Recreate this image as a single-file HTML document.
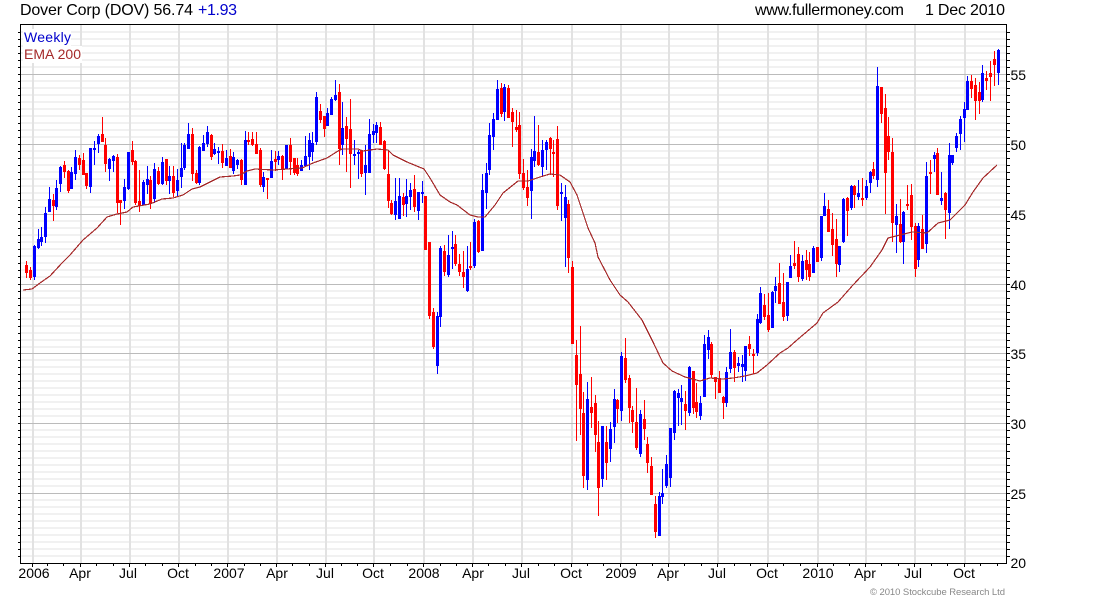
<!DOCTYPE html>
<html><head><meta charset="utf-8"><title>Dover Corp</title>
<style>html,body{margin:0;padding:0;background:#fff;width:1100px;height:600px;overflow:hidden}svg{display:block}text{font-family:"Liberation Sans",Arial,sans-serif}</style></head>
<body>
<svg width="1100" height="600" viewBox="0 0 1100 600" xmlns="http://www.w3.org/2000/svg">
<rect width="1100" height="600" fill="#fff"/>
<g shape-rendering="crispEdges" fill="none">
<path stroke="#f1f1f1" stroke-width="2" d="M21 32H1006M21 39H1006M21 46H1006M21 53H1006M21 60H1006M21 67H1006M21 81H1006M21 88H1006M21 95H1006M21 102H1006M21 109H1006M21 116H1006M21 123H1006M21 130H1006M21 137H1006M21 151H1006M21 158H1006M21 165H1006M21 172H1006M21 179H1006M21 186H1006M21 193H1006M21 200H1006M21 207H1006M21 221H1006M21 228H1006M21 235H1006M21 242H1006M21 249H1006M21 256H1006M21 263H1006M21 270H1006M21 277H1006M21 291H1006M21 298H1006M21 305H1006M21 312H1006M21 319H1006M21 326H1006M21 333H1006M21 340H1006M21 347H1006M21 360H1006M21 367H1006M21 374H1006M21 381H1006M21 388H1006M21 395H1006M21 402H1006M21 409H1006M21 416H1006M21 430H1006M21 437H1006M21 444H1006M21 451H1006M21 458H1006M21 465H1006M21 472H1006M21 479H1006M21 486H1006M21 500H1006M21 507H1006M21 514H1006M21 521H1006M21 528H1006M21 535H1006M21 542H1006M21 549H1006M21 556H1006"/>
<path stroke="#e2e2e2" stroke-width="1" d="M32.5 25V563M33.5 25V563M80.5 25V563M81.5 25V563M129.5 25V563M130.5 25V563M178.5 25V563M179.5 25V563M227.5 25V563M228.5 25V563M276.5 25V563M277.5 25V563M325.5 25V563M326.5 25V563M373.5 25V563M374.5 25V563M423.5 25V563M424.5 25V563M472.5 25V563M473.5 25V563M521.5 25V563M522.5 25V563M571.5 25V563M572.5 25V563M620.5 25V563M621.5 25V563M668.5 25V563M669.5 25V563M717.5 25V563M718.5 25V563M767.5 25V563M768.5 25V563M817.5 25V563M818.5 25V563M865.5 25V563M866.5 25V563M914.5 25V563M915.5 25V563M964.5 25V563M965.5 25V563"/>
<path stroke="#bbbbbb" stroke-width="1" d="M21 74.5H1006M21 144.5H1006M21 214.5H1006M21 284.5H1006M21 353.5H1006M21 423.5H1006M21 493.5H1006"/>
</g>
<rect x="23" y="29" width="48" height="17" fill="#fff"/>
<rect x="23" y="46" width="59" height="17" fill="#fff"/>
<g shape-rendering="crispEdges" fill="none" stroke="#0000ff">
<path stroke-width="1" d="M34.5 245V280M38.5 229V249M41.5 227V246M45.5 207V243M49.5 187V212M56.5 180V210M60.5 166V192M71.5 167V189M75.5 150V180M90.5 148V193M94.5 141V165M98.5 134V153M109.5 158V181M113.5 155V172M124.5 179V209M128.5 152V190M143.5 180V205M147.5 166V194M154.5 163V203M162.5 157V185M169.5 166V194M177.5 169V196M181.5 143V188M184.5 143V170M188.5 123V149M199.5 146V185M203.5 135V151M207.5 126V147M214.5 143V155M218.5 147V164M226.5 150V166M233.5 152V174M237.5 159V169M245.5 131V185M263.5 172V192M271.5 150V178M278.5 151V165M286.5 145V169M301.5 160V171M305.5 136V167M309.5 133V170M312.5 132V161M316.5 92V145M327.5 108V126M331.5 97V115M335.5 80V101M342.5 102V155M354.5 140V165M358.5 150V179M365.5 145V195M369.5 119V173M373.5 124V143M376.5 122V143M395.5 178V220M399.5 178V219M406.5 179V217M410.5 183V210M418.5 192V220M422.5 181V203M437.5 312V374M440.5 246V327M448.5 235V277M452.5 231V269M467.5 246V292M474.5 219V268M482.5 174V251M486.5 163V209M489.5 123V175M493.5 113V150M497.5 80V120M504.5 84V121M531.5 149V219M534.5 116V167M542.5 140V177M546.5 140V170M561.5 183V221M565.5 185V267M587.5 382V490M602.5 426V487M610.5 422V462M614.5 389V443M621.5 352V421M640.5 410V457M659.5 492V536M662.5 469V504M666.5 455V488M670.5 428V487M674.5 390V440M678.5 389V426M681.5 385V425M689.5 366V416M700.5 396V420M704.5 335V397M708.5 330V359M726.5 367V407M730.5 329V373M738.5 357V372M742.5 355V382M745.5 346V381M757.5 314V356M760.5 287V324M772.5 291V328M775.5 277V303M787.5 282V321M790.5 255V278M802.5 255V281M813.5 246V273M821.5 216V261M824.5 193V216M839.5 246V272M843.5 198V243M851.5 185V210M858.5 180V200M866.5 180V200M870.5 171V193M877.5 67V187M896.5 204V253M903.5 211V264M918.5 223V267M926.5 162V253M934.5 152V172M941.5 172V205M949.5 143V229M952.5 155V165M956.5 133V152M960.5 116V150M964.5 102V142M967.5 76V110M982.5 65V102M998.5 49V85"/>
<path stroke-width="3" d="M34.5 246V277M38.5 239V248M41.5 237V242M45.5 213V237M49.5 199V212M56.5 188V207M60.5 167V184M71.5 172V189M75.5 157V174M90.5 148V187M94.5 148V150M98.5 136V144M109.5 159V169M113.5 156V161M124.5 187V201M128.5 152V189M143.5 182V205M147.5 179V185M154.5 169V199M162.5 162V184M169.5 176V181M177.5 180V191M181.5 168V177M184.5 145V168M188.5 134V149M199.5 147V183M203.5 143V151M207.5 132V144M214.5 149V154M218.5 151V153M226.5 158V166M233.5 157V171M237.5 160V165M245.5 140V185M263.5 177V187M271.5 161V178M278.5 156V160M286.5 145V169M301.5 165V171M305.5 156V166M309.5 140V157M312.5 143V152M316.5 97V142M327.5 113V126M331.5 99V115M335.5 95V100M342.5 128V145M354.5 154V156M358.5 152V154M365.5 165V173M369.5 134V173M373.5 131V135M376.5 125V133M395.5 201V215M399.5 196V219M406.5 196V204M410.5 190V197M418.5 192V211M422.5 192V194M437.5 316V366M440.5 248V317M448.5 255V275M452.5 247V249M467.5 269V291M474.5 222V266M482.5 190V251M486.5 173V193M489.5 135V170M493.5 119V137M497.5 89V120M504.5 87V112M531.5 157V191M534.5 151V161M542.5 150V167M546.5 142V150M561.5 192V194M565.5 197V218M587.5 399V480M602.5 426V479M610.5 429V449M614.5 399V427M621.5 356V411M640.5 414V454M659.5 496V536M662.5 493V497M666.5 464V486M670.5 428V478M674.5 391V433M678.5 393V398M681.5 398V402M689.5 367V413M700.5 403V416M704.5 344V397M708.5 337V350M726.5 372V403M730.5 352V369M738.5 363V366M742.5 364V367M745.5 346V371M757.5 319V353M760.5 293V323M772.5 292V328M775.5 286V291M787.5 282V316M790.5 266V278M802.5 261V279M813.5 248V273M821.5 216V258M824.5 206V216M839.5 246V265M843.5 199V242M851.5 186V208M858.5 193V197M866.5 186V198M870.5 172V183M877.5 86V180M896.5 216V225M903.5 212V242M918.5 226V260M926.5 176V244M934.5 155V159M941.5 198V201M949.5 155V213M952.5 155V163M956.5 136V148M960.5 119V134M964.5 109V118M967.5 81V110M982.5 73V100M998.5 50V73"/>
</g>
<g shape-rendering="crispEdges" fill="none" stroke="#ff0000">
<path stroke-width="1" d="M26.5 261V278M30.5 267V280M53.5 194V221M64.5 161V178M68.5 170V193M79.5 155V170M83.5 153V175M86.5 173V189M102.5 117V142M105.5 138V172M117.5 154V213M120.5 200V225M132.5 141V165M135.5 160V205M139.5 170V212M150.5 176V209M158.5 167V185M166.5 159V185M173.5 166V197M192.5 128V181M196.5 170V184M211.5 134V160M222.5 144V168M230.5 149V168M241.5 159V185M248.5 132V145M252.5 132V146M256.5 132V154M260.5 148V187M267.5 178V199M275.5 151V171M282.5 155V180M290.5 138V175M294.5 158V175M297.5 158V176M320.5 104V123M324.5 116V137M339.5 84V165M346.5 117V172M350.5 99V188M361.5 150V177M380.5 122V145M384.5 140V170M388.5 150V208M391.5 200V215M403.5 193V216M414.5 175V212M425.5 196V250M429.5 242V319M433.5 308V349M444.5 245V276M455.5 235V266M459.5 254V276M463.5 251V288M470.5 242V270M478.5 220V253M501.5 83V117M508.5 85V118M512.5 108V147M516.5 110V132M519.5 112V179M523.5 159V190M527.5 170V206M538.5 125V166M550.5 137V175M553.5 140V177M557.5 126V210M568.5 200V273M572.5 261V344M576.5 340V441M580.5 326V435M583.5 392V488M591.5 377V428M595.5 395V452M598.5 421V516M606.5 426V480M617.5 399V423M625.5 338V383M629.5 375V423M632.5 406V433M636.5 388V450M644.5 400V440M647.5 437V473M651.5 457V495M655.5 496V538M685.5 391V430M693.5 371V414M696.5 383V418M711.5 342V378M715.5 377V399M719.5 371V393M723.5 396V419M734.5 350V382M749.5 336V356M753.5 349V374M764.5 294V320M768.5 293V332M779.5 263V304M783.5 273V321M794.5 241V269M798.5 247V282M806.5 250V280M809.5 252V281M817.5 247V262M828.5 200V232M832.5 213V256M836.5 219V277M847.5 197V236M854.5 185V208M862.5 178V206M873.5 162V179M881.5 87V123M885.5 94V214M888.5 117V160M892.5 138V242M900.5 199V243M907.5 185V210M911.5 184V240M915.5 223V277M922.5 215V249M930.5 160V194M937.5 148V195M945.5 192V239M971.5 75V98M975.5 78V120M979.5 82V114M986.5 71V90M990.5 61V101M994.5 51V86"/>
<path stroke-width="3" d="M26.5 265V273M30.5 270V278M53.5 200V206M64.5 165V172M68.5 171V191M79.5 158V165M83.5 160V175M86.5 173V186M102.5 134V142M105.5 145V164M117.5 157V203M120.5 200V203M132.5 150V162M135.5 161V203M139.5 201V206M150.5 180V204M158.5 171V184M166.5 159V181M173.5 176V193M192.5 134V174M196.5 173V183M211.5 135V157M222.5 151V163M230.5 156V168M241.5 160V180M248.5 140V142M252.5 139V145M256.5 144V154M260.5 150V185M267.5 178V180M275.5 159V162M282.5 156V169M290.5 145V162M294.5 158V173M297.5 165V174M320.5 111V120M324.5 116V129M339.5 92V149M346.5 126V139M350.5 129V154M361.5 150V174M380.5 127V145M384.5 141V169M388.5 174V201M391.5 203V214M403.5 197V205M414.5 189V207M425.5 196V250M429.5 242V316M433.5 312V347M444.5 251V272M455.5 244V264M459.5 264V272M463.5 272V277M470.5 266V268M478.5 221V252M501.5 88V114M508.5 88V118M512.5 112V122M516.5 127V130M519.5 125V174M523.5 173V188M527.5 187V198M538.5 152V165M550.5 138V149M553.5 152V154M557.5 139V206M568.5 204V258M572.5 267V344M576.5 355V385M580.5 374V409M583.5 413V476M591.5 407V413M595.5 403V435M598.5 442V488M606.5 442V463M617.5 400V409M625.5 358V380M629.5 378V408M632.5 410V422M636.5 422V448M644.5 419V429M647.5 444V463M651.5 466V495M655.5 504V532M685.5 404V411M693.5 371V408M696.5 402V412M711.5 344V375M715.5 377V382M719.5 379V393M723.5 397V403M734.5 352V368M749.5 344V349M753.5 354V356M764.5 305V317M768.5 315V330M779.5 283V304M783.5 302V317M794.5 263V266M798.5 254V277M806.5 260V270M809.5 264V277M817.5 247V262M828.5 209V232M832.5 229V245M836.5 239V264M847.5 198V211M854.5 186V195M862.5 198V200M873.5 169V176M881.5 87V114M885.5 108V173M888.5 136V152M892.5 152V223M900.5 224V242M907.5 204V206M911.5 195V227M915.5 226V269M922.5 229V249M930.5 172V174M937.5 153V195M945.5 193V210M971.5 81V89M975.5 85V101M979.5 92V101M986.5 78V81M990.5 73V77M994.5 59V65"/>
</g>
<polyline shape-rendering="crispEdges" fill="none" stroke="#a52a2a" stroke-width="1.2" points="23,290 32,289 40,283 50,276 62,263 70,255 83,240 97,228 107,217 117,214 127,212 133,207 150,204 162,199 173,198 183,195 192,189 200,187 212,181 220,177 233,176 240,175 247,171 255,169 273,170 287,169 302,168 313,163 327,158 338,151 342,149 358,149 363,151 377,149 388,150 393,155 407,162 424,169 430,178 440,195 450,202 457,205 470,215 478,217 485,217 495,205 503,193 518,181 528,181 540,177 550,174 560,175 570,182 577,195 582,210 588,228 595,243 598,257 610,280 620,295 628,302 642,320 653,342 663,363 672,371 685,377 700,381 710,378 723,379 733,378 745,376 757,373 767,365 780,353 788,348 797,340 817,323 823,313 838,302 853,285 870,267 882,250 888,238 900,235 912,232 927,233 938,223 950,220 965,205 973,192 983,178 997,165"/>
<g shape-rendering="crispEdges" fill="none" stroke="#000">
<path stroke-width="1" d="M20.5 24.5H1006.5V563.5H20.5Z"/>
<path stroke-width="1" d="M18 32.5H20M18 39.5H20M18 46.5H20M18 53.5H20M18 60.5H20M18 67.5H20M18 74.5H20M18 81.5H20M18 88.5H20M18 95.5H20M18 102.5H20M18 109.5H20M18 116.5H20M18 123.5H20M18 130.5H20M18 137.5H20M18 144.5H20M18 151.5H20M18 158.5H20M18 165.5H20M18 172.5H20M18 179.5H20M18 186.5H20M18 193.5H20M18 200.5H20M18 207.5H20M18 214.5H20M18 221.5H20M18 228.5H20M18 235.5H20M18 242.5H20M18 249.5H20M18 256.5H20M18 263.5H20M18 270.5H20M18 277.5H20M18 284.5H20M18 291.5H20M18 298.5H20M18 305.5H20M18 312.5H20M18 319.5H20M18 326.5H20M18 333.5H20M18 340.5H20M18 347.5H20M18 353.5H20M18 360.5H20M18 367.5H20M18 374.5H20M18 381.5H20M18 388.5H20M18 395.5H20M18 402.5H20M18 409.5H20M18 416.5H20M18 423.5H20M18 430.5H20M18 437.5H20M18 444.5H20M18 451.5H20M18 458.5H20M18 465.5H20M18 472.5H20M18 479.5H20M18 486.5H20M18 493.5H20M18 500.5H20M18 507.5H20M18 514.5H20M18 521.5H20M18 528.5H20M18 535.5H20M18 542.5H20M18 549.5H20M18 556.5H20"/>
<path stroke-width="1" d="M1007 32.5H1010M1007 39.5H1010M1007 46.5H1010M1007 53.5H1010M1007 60.5H1010M1007 67.5H1010M1007 74.5H1010M1007 81.5H1010M1007 88.5H1010M1007 95.5H1010M1007 102.5H1010M1007 109.5H1010M1007 116.5H1010M1007 123.5H1010M1007 130.5H1010M1007 137.5H1010M1007 144.5H1010M1007 151.5H1010M1007 158.5H1010M1007 165.5H1010M1007 172.5H1010M1007 179.5H1010M1007 186.5H1010M1007 193.5H1010M1007 200.5H1010M1007 207.5H1010M1007 214.5H1010M1007 221.5H1010M1007 228.5H1010M1007 235.5H1010M1007 242.5H1010M1007 249.5H1010M1007 256.5H1010M1007 263.5H1010M1007 270.5H1010M1007 277.5H1010M1007 284.5H1010M1007 291.5H1010M1007 298.5H1010M1007 305.5H1010M1007 312.5H1010M1007 319.5H1010M1007 326.5H1010M1007 333.5H1010M1007 340.5H1010M1007 347.5H1010M1007 353.5H1010M1007 360.5H1010M1007 367.5H1010M1007 374.5H1010M1007 381.5H1010M1007 388.5H1010M1007 395.5H1010M1007 402.5H1010M1007 409.5H1010M1007 416.5H1010M1007 423.5H1010M1007 430.5H1010M1007 437.5H1010M1007 444.5H1010M1007 451.5H1010M1007 458.5H1010M1007 465.5H1010M1007 472.5H1010M1007 479.5H1010M1007 486.5H1010M1007 493.5H1010M1007 500.5H1010M1007 507.5H1010M1007 514.5H1010M1007 521.5H1010M1007 528.5H1010M1007 535.5H1010M1007 542.5H1010M1007 549.5H1010M1007 556.5H1010"/>
<path stroke-width="1" d="M32.5 564V567M47.5 564V566M63.5 564V566M80.5 564V567M96.5 564V566M113.5 564V566M129.5 564V567M145.5 564V566M162.5 564V566M178.5 564V567M195.5 564V566M211.5 564V566M227.5 564V567M244.5 564V566M260.5 564V566M276.5 564V567M292.5 564V566M309.5 564V566M325.5 564V567M341.5 564V566M357.5 564V566M373.5 564V567M390.5 564V566M407.5 564V566M423.5 564V567M440.5 564V566M456.5 564V566M472.5 564V567M488.5 564V566M505.5 564V566M521.5 564V567M538.5 564V566M554.5 564V566M571.5 564V567M587.5 564V566M603.5 564V566M620.5 564V567M636.5 564V566M652.5 564V566M668.5 564V567M684.5 564V566M701.5 564V566M717.5 564V567M734.5 564V566M750.5 564V566M767.5 564V567M783.5 564V566M800.5 564V566M817.5 564V567M833.5 564V566M849.5 564V566M865.5 564V567M881.5 564V566M898.5 564V566M914.5 564V567M931.5 564V566M947.5 564V566M964.5 564V567M980.5 564V566M997.5 564V566"/>
</g>
<text x="20" y="15" font-size="16" fill="#000" textLength="173" lengthAdjust="spacing">Dover Corp (DOV) 56.74</text>
<text x="198" y="15" font-size="16" fill="#0000cc" textLength="39" lengthAdjust="spacing">+1.93</text>
<text x="755" y="15" font-size="16" fill="#000" textLength="149" lengthAdjust="spacing">www.fullermoney.com</text>
<text x="925" y="15" font-size="16" fill="#000" textLength="80" lengthAdjust="spacing">1 Dec 2010</text>
<text x="24" y="42" font-size="14" fill="#0000cc" textLength="47" lengthAdjust="spacing">Weekly</text>
<text x="24" y="59" font-size="14" fill="#a52a2a" textLength="57" lengthAdjust="spacing">EMA 200</text>
<g font-size="14" fill="#000">
<text x="1010.5" y="80">55</text><text x="1010.5" y="150">50</text><text x="1010.5" y="220">45</text><text x="1010.5" y="290">40</text><text x="1010.5" y="359">35</text><text x="1010.5" y="429">30</text><text x="1010.5" y="499">25</text><text x="1010.5" y="568">20</text>
</g>
<g font-size="14" fill="#000" text-anchor="middle">
<text x="34" y="578">2006</text><text x="80" y="578">Apr</text><text x="128" y="578">Jul</text><text x="178" y="578">Oct</text><text x="229" y="578">2007</text><text x="277" y="578">Apr</text><text x="325" y="578">Jul</text><text x="373" y="578">Oct</text><text x="424" y="578">2008</text><text x="473" y="578">Apr</text><text x="521" y="578">Jul</text><text x="571" y="578">Oct</text><text x="621" y="578">2009</text><text x="668" y="578">Apr</text><text x="717" y="578">Jul</text><text x="767" y="578">Oct</text><text x="818" y="578">2010</text><text x="865" y="578">Apr</text><text x="913" y="578">Jul</text><text x="964" y="578">Oct</text>
</g>
<text x="870" y="595" font-size="9.5" fill="#888888" textLength="135" lengthAdjust="spacing">© 2010 Stockcube Research Ltd</text>
</svg>
</body></html>
